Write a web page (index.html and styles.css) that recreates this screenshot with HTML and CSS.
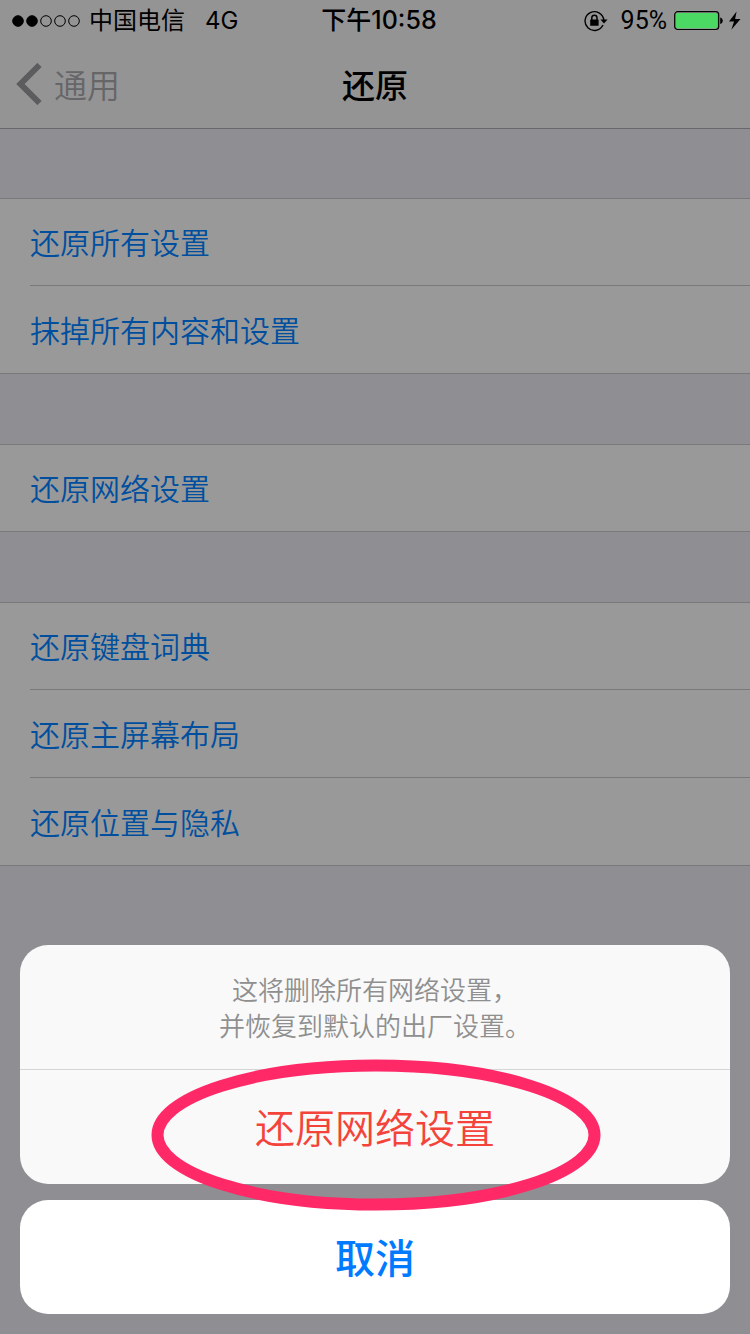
FILE: index.html
```html
<!DOCTYPE html>
<html lang="zh-CN">
<head>
<meta charset="utf-8">
<meta name="viewport" content="width=device-width">
<title>还原</title>
<link rel="stylesheet" href="styles.css">
</head>
<body>
<header class="top">
  <div class="status">
    <div class="status-left">
      <svg class="signal" width="68" height="14" viewBox="0 0 68 14" aria-hidden="true">
        <g stroke="#000" stroke-width="1"><circle cx="6" cy="7" r="5.3"/><circle cx="20" cy="7" r="5.3"/>
        <g fill="none"><circle cx="34" cy="7" r="5.3"/><circle cx="48" cy="7" r="5.3"/><circle cx="62" cy="7" r="5.3"/></g></g>
      </svg>
      <span class="carrier">中国电信</span>
      <span>4G</span>
    </div>
    <div class="time">下午10:58</div>
    <div class="status-right">
      <svg class="lock" width="24" height="22" viewBox="0 0 24 22" aria-hidden="true">
        <path d="M19 15A9.400 9.400 0 1 1 19.800 10" fill="none" stroke="#000" stroke-width="1.4"/>
        <path d="M16.400 9.400h7.200L20 13.600z"/>
        <rect x="6.200" y="9.600" width="8.400" height="6.200" rx=".6"/>
        <path d="M7.800 10V7.800a2.600 2.600 0 0 1 5.200 0V10" fill="none" stroke="#000" stroke-width="1.500"/>
      </svg>
      <span class="percent">95%</span>
      <svg class="battery" width="68" height="20" viewBox="0 0 68 20" aria-hidden="true">
        <rect x=".7" y=".7" width="44" height="17.8" rx="3" fill="none" stroke="#000" stroke-width="1.2"/>
        <rect x="2" y="2" width="41" height="15.2" rx="1.6" fill="#4bd964"/>
        <path d="M46.200 6.400c3.400.500 3.400 6 0 6.500z"/>
        <path d="M62.600.600L55 10.600h5.100L57.300 18.800 66.500 8h-5.400z"/>
      </svg>
    </div>
  </div>
  <nav class="nav">
    <button class="back" type="button">
      <svg class="chevron" width="26" height="42" viewBox="0 0 26 42" aria-hidden="true"><path d="M23.500 2L4.500 21l19 19" fill="none" stroke="currentColor" stroke-width="6"/></svg>
      <span>通用</span>
    </button>
    <h1 class="title">还原</h1>
  </nav>
</header>
<main class="settings">
  <ul class="group">
    <li><button class="row" type="button">还原所有设置</button></li>
    <li><button class="row" type="button">抹掉所有内容和设置</button></li>
  </ul>
  <ul class="group">
    <li><button class="row" type="button">还原网络设置</button></li>
  </ul>
  <ul class="group">
    <li><button class="row" type="button">还原键盘词典</button></li>
    <li><button class="row" type="button">还原主屏幕布局</button></li>
    <li><button class="row" type="button">还原位置与隐私</button></li>
  </ul>
</main>
<div class="sheet" role="dialog" aria-labelledby="message">
  <div class="card">
    <p class="message" id="message">这将删除所有网络设置，<br>并恢复到默认的出厂设置。</p>
    <button class="action destructive" type="button">还原网络设置</button>
    <svg class="highlight" width="450" height="152" viewBox="0 0 450 152" aria-hidden="true"><ellipse cx="225" cy="76" rx="218.500" ry="69.500" fill="none" stroke="#ff2968" stroke-width="12"/></svg>
  </div>
  <button class="action cancel" type="button">取消</button>
</div>
</body>
</html>
```
FILE: styles.css
```css
* {
  box-sizing: border-box;
}

body {
  margin: 0;
  min-height: 100vh;
  background: #8f8e93;
  color: #000;
  font-family: Inter, "Noto Sans CJK SC", sans-serif;
}

button {
  margin: 0;
  padding: 0;
  border: 0;
  background: none;
  font: inherit;
  color: inherit;
}

svg {
  display: block;
  flex: none;
}

.top {
  background: #949495;
  border-bottom: 1px solid #68686b;
}

.status {
  display: grid;
  grid-template-columns: 1fr auto 1fr;
  align-items: center;
  height: 40px;
  padding: 1px 8px 0 12px;
  font-size: 24px;
  line-height: 39px;
}

.status-left,
.status-right {
  display: flex;
  align-items: center;
}

.status-right {
  justify-content: flex-end;
}

.carrier {
  margin: 0 20px 0 9px;
}

.time {
  padding-left: 4px;
  font-size: 25px;
  font-weight: 500;
}

.lock {
  margin-right: 13px;
}

.percent {
  font-family: Roboto, sans-serif;
  font-size: 25px;
}

.battery {
  margin-left: 7px;
}

.nav {
  display: grid;
  grid-template-columns: 1fr auto 1fr;
  align-items: center;
  height: 88px;
  padding: 0 16px;
}

.back {
  display: flex;
  align-items: center;
  gap: 12px;
  color: #666668;
  font-size: 33px;
  font-weight: 350;
}

.chevron {
  color: #5c5c5e;
}

.title {
  margin: 0;
  font-size: 33px;
  font-weight: 500;
}

.settings {
  display: flex;
  flex-direction: column;
  gap: 70px;
  padding-top: 69px;
}

.group {
  margin: 0;
  padding: 0 0 0 30px;
  list-style: none;
  background: #999;
  border-top: 1px solid #79797c;
  border-bottom: 1px solid #79797c;
}

.row {
  display: block;
  width: 100%;
  height: 86px;
  padding-bottom: 2px;
  text-align: left;
  font-size: 30px;
  font-weight: 350;
  color: #004f9f;
}

li + li .row {
  height: 88px;
  border-top: 1px solid #79797c;
}

.sheet {
  position: fixed;
  left: 0;
  right: 0;
  bottom: 0;
  display: flex;
  flex-direction: column;
  gap: 16px;
  padding: 20px;
}

.card {
  position: relative;
  background: #f9f9f9;
  border-radius: 28px;
}

.message {
  margin: 0;
  padding: 28px 20px 24px;
  text-align: center;
  font-size: 26px;
  font-weight: 350;
  line-height: 36px;
  color: #8f8f8f;
}

.action {
  display: block;
  width: 100%;
  height: 114px;
  padding-bottom: 2px;
  font-size: 40px;
}

.destructive {
  height: 115px;
  border-top: 1px solid #d5d5d7;
  color: #f4433a;
  font-weight: 350;
}

.cancel {
  background: #fff;
  border-radius: 28px;
  color: #007aff;
  font-weight: 500;
}

.highlight {
  position: absolute;
  top: 114px;
  left: calc(50% - 224px);
  z-index: 1;
  pointer-events: none;
}
```
